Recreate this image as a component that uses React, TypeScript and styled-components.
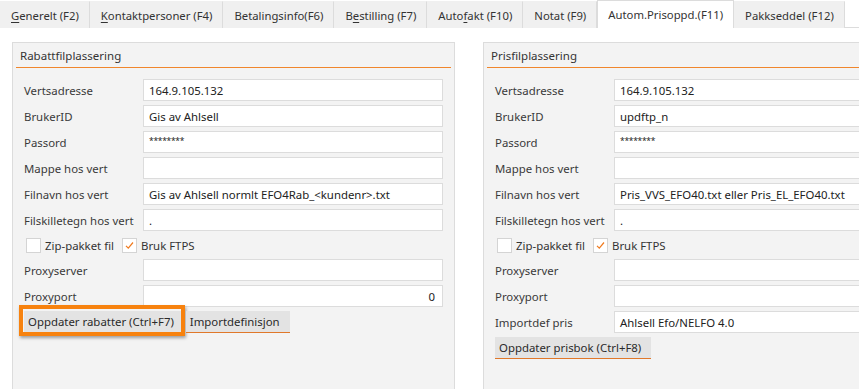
import React from "react";
import styled, { createGlobalStyle } from "styled-components";

const Global = createGlobalStyle`
  html, body {
    margin: 0;
    padding: 0;
    background: #ffffff;
  }
  body {
    font-family: "Segoe UI", "Noto Sans", sans-serif;
    font-size: 11.4px;
    color: #333333;
  }
`;

const Page = styled.div`
  width: 859px;
  height: 389px;
  overflow: hidden;
  background: #ffffff;
`;

const TabBar = styled.div`
  display: flex;
  height: 28px;
  box-sizing: border-box;
  border-bottom: 1px solid #dcdcdc;
  background: #ffffff;
`;

const Tab = styled.div<{ $active?: boolean }>`
  display: flex;
  align-items: center;
  box-sizing: border-box;
  height: ${(p) => (p.$active ? "28px" : "27px")};
  margin-top: ${(p) => (p.$active ? "0" : "1px")};
  padding: 0 10px;
  background: ${(p) => (p.$active ? "#ffffff" : "#f0f0f0")};
  border-right: 1px solid #dcdcdc;
  border-top: 1px solid ${(p) => (p.$active ? "#dcdcdc" : "transparent")};
  border-left: 1px solid ${(p) => (p.$active ? "#dcdcdc" : "transparent")};
  margin-bottom: ${(p) => (p.$active ? "-1px" : "0")};
  white-space: nowrap;
  color: #333333;
  font-size: 11.3px;
  u {
    text-decoration: underline;
    text-underline-offset: 2px;
  }
`;

const Content = styled.div`
  display: flex;
  gap: 28px;
  padding: 14px 0 0 12px;
`;

const Panel = styled.section`
  flex: none;
  width: 443px;
  height: 360px;
  box-sizing: border-box;
  background: #f3f3f3;
  border: 1px solid #dcdcdc;
  display: flex;
  flex-direction: column;
`;

const PanelTitle = styled.div`
  height: 24px;
  margin: 0 3px;
  padding-left: 4px;
  display: flex;
  align-items: center;
  border-bottom: 1.5px solid #f0862c;
  color: #333333;
  font-size: 11.5px;
`;

const Body = styled.div`
  display: flex;
  flex-direction: column;
  gap: 4px;
  padding: 11px 11px 0 11px;
`;

const Row = styled.div`
  display: grid;
  grid-template-columns: 119px 300px;
  align-items: center;
  height: 22px;
`;

const Label = styled.span`
  color: #3a3a3a;
  white-space: nowrap;
`;

const Field = styled.div<{ $right?: boolean }>`
  height: 22px;
  box-sizing: border-box;
  background: #ffffff;
  border: 1px solid #dcdcdc;
  display: flex;
  align-items: center;
  justify-content: ${(p) => (p.$right ? "flex-end" : "flex-start")};
  padding: 0 7px 0 5px;
  color: #222222;
  white-space: nowrap;
  overflow: hidden;
`;

const Stars = styled.span`
  font-size: 8.5px;
  letter-spacing: -0.3px;
  position: relative;
  top: -2px;
`;

const CheckRow = styled.div`
  display: flex;
  align-items: center;
  height: 20px;
  padding-left: 2px;
`;

const CheckItem = styled.label`
  display: flex;
  align-items: center;
  gap: 4px;
  margin-right: 8px;
  color: #333333;
  white-space: nowrap;
`;

const Box = styled.span`
  width: 15px;
  height: 15px;
  box-sizing: border-box;
  background: #ffffff;
  border: 1px solid #d4d4d4;
  display: flex;
  align-items: center;
  justify-content: center;
`;

const Buttons = styled.div`
  display: flex;
  gap: 5px;
  height: 22px;
`;

const Button = styled.div<{ $highlight?: boolean }>`
  position: relative;
  height: 22px;
  box-sizing: border-box;
  display: flex;
  align-items: center;
  padding: 0 ${(p) => (p.$highlight ? "7px" : "10px")} 0 4px;
  background: #e3e3e3;
  border-bottom: 1px solid #e0782a;
  color: #2a2a2a;
  white-space: nowrap;
  ${(p) =>
    p.$highlight &&
    `
    &::after {
      content: "";
      position: absolute;
      left: -5px;
      top: -6px;
      right: -4px;
      bottom: -4px;
      border: 4px solid #f7820e;
      box-shadow: 1px 2px 3px rgba(0, 0, 0, 0.35);
      pointer-events: none;
    }
  `}
`;

const Check = () => (
  <svg width="11" height="11" viewBox="0 0 11 11">
    <path d="M2 5.8 L4.3 8.2 L9 2.5" fill="none" stroke="#f07a1e" strokeWidth="1.2" />
  </svg>
);

type FieldDef = { label: string; value?: string; stars?: boolean; right?: boolean };

const FieldRow = ({ label, value, stars, right }: FieldDef) => (
  <Row>
    <Label>{label}</Label>
    <Field $right={right}>{stars ? <Stars>********</Stars> : value}</Field>
  </Row>
);

const CheckBoxes = () => (
  <CheckRow>
    <CheckItem>
      <Box />
      Zip-pakket fil
    </CheckItem>
    <CheckItem>
      <Box>
        <Check />
      </Box>
      Bruk FTPS
    </CheckItem>
  </CheckRow>
);

const App = () => {
  const left: FieldDef[] = [
    { label: "Vertsadresse", value: "164.9.105.132" },
    { label: "BrukerID", value: "Gis av Ahlsell" },
    { label: "Passord", stars: true },
    { label: "Mappe hos vert", value: "" },
    { label: "Filnavn hos vert", value: "Gis av Ahlsell normlt EFO4Rab_<kundenr>.txt" },
    { label: "Filskilletegn hos vert", value: "." },
  ];
  const right: FieldDef[] = [
    { label: "Vertsadresse", value: "164.9.105.132" },
    { label: "BrukerID", value: "updftp_n" },
    { label: "Passord", stars: true },
    { label: "Mappe hos vert", value: "" },
    { label: "Filnavn hos vert", value: "Pris_VVS_EFO40.txt eller Pris_EL_EFO40.txt" },
    { label: "Filskilletegn hos vert", value: "." },
  ];

  return (
    <>
      <Global />
      <Page>
        <TabBar>
          <Tab>
            <span>
              <u>G</u>enerelt (F2)
            </span>
          </Tab>
          <Tab>
            <span>
              <u>K</u>ontaktpersoner (F4)
            </span>
          </Tab>
          <Tab>Betalingsinfo(F6)</Tab>
          <Tab>
            <span>
              B<u>e</u>stilling (F7)
            </span>
          </Tab>
          <Tab>
            <span>
              Auto<u>f</u>akt (F10)
            </span>
          </Tab>
          <Tab>Notat (F9)</Tab>
          <Tab $active>Autom.Prisoppd.(F11)</Tab>
          <Tab>Pakkseddel (F12)</Tab>
        </TabBar>
        <Content>
          <Panel>
            <PanelTitle>Rabattfilplassering</PanelTitle>
            <Body>
              {left.map((f) => (
                <FieldRow key={f.label} {...f} />
              ))}
              <CheckBoxes />
              <FieldRow label="Proxyserver" value="" />
              <FieldRow label="Proxyport" value="0" right />
              <Buttons>
                <Button $highlight>Oppdater rabatter (Ctrl+F7)</Button>
                <Button>Importdefinisjon</Button>
              </Buttons>
            </Body>
          </Panel>
          <Panel>
            <PanelTitle>Prisfilplassering</PanelTitle>
            <Body>
              {right.map((f) => (
                <FieldRow key={f.label} {...f} />
              ))}
              <CheckBoxes />
              <FieldRow label="Proxyserver" value="" />
              <FieldRow label="Proxyport" value="" />
              <FieldRow label="Importdef pris" value="Ahlsell Efo/NELFO 4.0" />
              <Buttons>
                <Button>Oppdater prisbok (Ctrl+F8)</Button>
              </Buttons>
            </Body>
          </Panel>
        </Content>
      </Page>
    </>
  );
};

export default App;
